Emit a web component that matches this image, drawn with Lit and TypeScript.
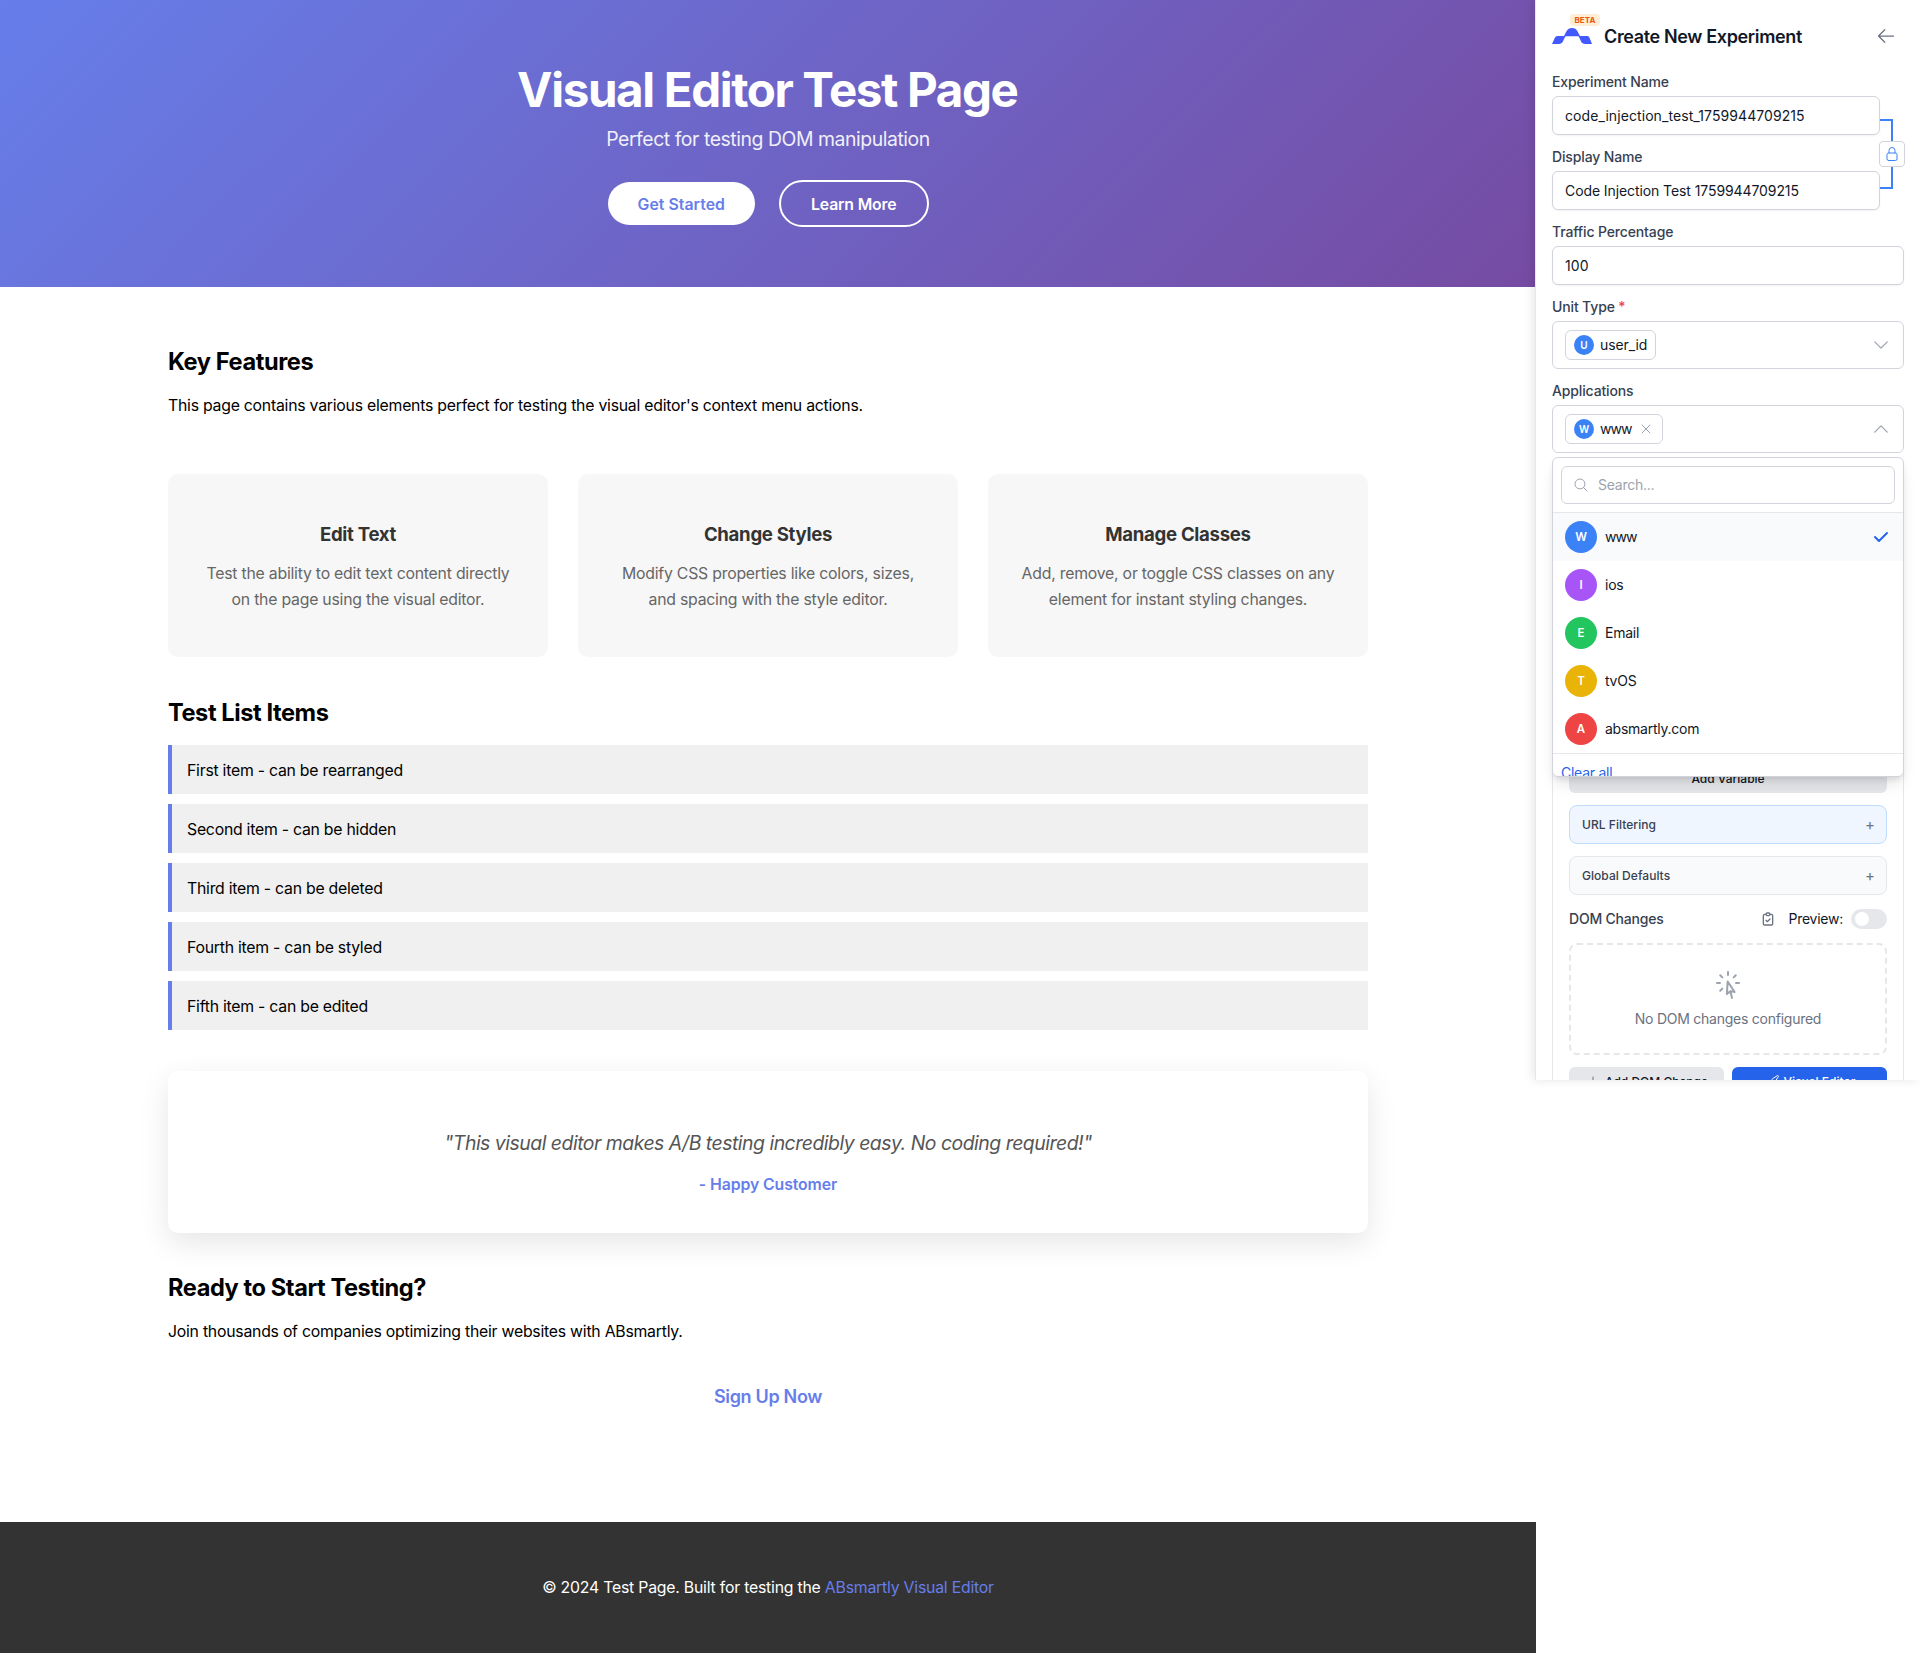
import { LitElement, html, css, svg } from "lit";
import { customElement } from "lit/decorators.js";

const FEATURES = [
  { title: "Edit Text", lines: ["Test the ability to edit text content directly", "on the page using the visual editor."] },
  { title: "Change Styles", lines: ["Modify CSS properties like colors, sizes,", "and spacing with the style editor."] },
  { title: "Manage Classes", lines: ["Add, remove, or toggle CSS classes on any", "element for instant styling changes."] },
];

const ITEMS = [
  "First item - can be rearranged",
  "Second item - can be hidden",
  "Third item - can be deleted",
  "Fourth item - can be styled",
  "Fifth item - can be edited",
];

const APPLICATIONS = [
  { name: "www", color: "#3b82f6", selected: true },
  { name: "ios", color: "#a855f7", selected: false },
  { name: "Email", color: "#22c55e", selected: false },
  { name: "tvOS", color: "#eab308", selected: false },
  { name: "absmartly.com", color: "#ef4444", selected: false },
];

const PATHS = {
  arrowLeft: "M10.5 19.5L3 12m0 0l7.5-7.5M3 12h18",
  lock: "M16.5 10.5V6.75a4.5 4.5 0 10-9 0v3.75m-.75 11.25h10.5a2.25 2.25 0 002.25-2.25v-6.75a2.25 2.25 0 00-2.25-2.25H6.75a2.25 2.25 0 00-2.25 2.25v6.75a2.25 2.25 0 002.25 2.25z",
  chevronDown: "M19.5 8.25l-7.5 7.5-7.5-7.5",
  chevronUp: "M4.5 15.75l7.5-7.5 7.5 7.5",
  close: "M6 18L18 6M6 6l12 12",
  search: "M21 21l-5.197-5.197m0 0A7.5 7.5 0 105.196 5.196a7.5 7.5 0 0010.607 10.607z",
  clipboard: "M9 5H7a2 2 0 00-2 2v12a2 2 0 002 2h10a2 2 0 002-2V7a2 2 0 00-2-2h-2M9 5a2 2 0 002 2h2a2 2 0 002-2M9 5a2 2 0 012-2h2a2 2 0 012 2m-6 9l2 2 4-4",
  cursor: "M15.042 21.672L13.684 16.6m0 0l-2.51 2.225.569-9.47 5.227 7.917-3.286-.672zM12 2.25V4.5m5.834.166l-1.591 1.591M20.25 10.5H18M7.757 14.743l-1.59 1.59M6 10.5H3.75m4.007-4.243l-1.59-1.59",
  plus: "M12 4.5v15m7.5-7.5h-15",
  brush: "M9.53 16.122a3 3 0 00-5.78 1.128 2.25 2.25 0 01-2.4 2.245 4.5 4.5 0 008.4-2.245c0-.399-.078-.78-.22-1.128zm0 0a15.998 15.998 0 003.388-1.62m-5.043-.025a15.994 15.994 0 011.622-3.395m3.42 3.42a15.995 15.995 0 004.764-4.648l3.876-5.814a1.151 1.151 0 00-1.597-1.597L14.146 6.32a15.996 15.996 0 00-4.649 4.763m3.42 3.42a6.776 6.776 0 00-3.42-3.42",
};

const icon = (d: string, size: number, width = 1.5) => html`
  <svg width=${size} height=${size} viewBox="0 0 24 24" fill="none" stroke="currentColor"
    stroke-width=${width} stroke-linecap="round" stroke-linejoin="round">${svg`<path d=${d}></path>`}</svg>`;

@customElement("test-page")
export class TestPage extends LitElement {
  static styles = css`
    :host { display: block; width: 1536px; font-family: Inter, sans-serif; font-size: 15.8px; line-height: 19px; letter-spacing: -0.24px; color: #000; background: #fff; }
    h1, h2, h3, p { margin: 0; }
    .hero { height: 287px; box-sizing: border-box; padding-top: 61px; text-align: center; color: #fff; background: linear-gradient(135deg, #667eea 0%, #764ba2 100%); }
    h1 { font-size: 47.5px; line-height: 58px; font-weight: 750; letter-spacing: -1.38px; text-indent: -1.4px; }
    .sub { margin-top: 8px; font-size: 19.4px; line-height: 24px; letter-spacing: -0.44px; opacity: 0.9; }
    .actions { margin-top: 29px; display: flex; justify-content: center; align-items: center; gap: 24px; }
    .btn { box-sizing: border-box; border-radius: 25px; font-weight: 600; padding: 13px 0 11px; white-space: nowrap; }
    .primary { width: 147.5px; background: #fff; color: #667eea; letter-spacing: 0.05px; }
    .outline { width: 149.5px; border: 2px solid #fff; letter-spacing: -0.16px; }
    .content { width: 1200px; margin: 0 auto; padding-top: 60px; box-sizing: border-box; height: 1234.5px; }
    h2 { font-size: 23.6px; line-height: 29px; font-weight: 700; letter-spacing: -0.42px; }
    .lead { margin-top: 20px; letter-spacing: -0.235px; }
    .cards { margin: 59px 0 41px; display: grid; grid-template-columns: repeat(3, 1fr); gap: 30px; }
    .card { height: 183.3px; box-sizing: border-box; padding-top: 49px; border-radius: 10px; background: #f7f7f7; text-align: center; }
    h3 { font-size: 18.6px; line-height: 22px; font-weight: 700; letter-spacing: -0.3px; color: #333; }
    .card p { margin-top: 15.5px; line-height: 26px; color: #666; letter-spacing: -0.22px; }
    .list { margin-top: 18px; display: flex; flex-direction: column; gap: 10px; }
    .item { border-left: 4px solid #667eea; background: #f0f0f0; padding: 15.5px 15px 14.5px; }
    .quote { margin: 40.5px 0 40px; height: 162px; box-sizing: border-box; padding-top: 60.2px; text-align: center; background: #fff; border-radius: 10px; box-shadow: 0 10px 30px rgba(0, 0, 0, 0.1); }
    .words { font-size: 19.4px; line-height: 24px; font-style: italic; letter-spacing: -0.48px; color: #555; }
    .author { margin-top: 19.8px; font-weight: 600; letter-spacing: -0.09px; color: #667eea; }
    .signup { margin-top: 45px; text-align: center; font-size: 18px; line-height: 22px; font-weight: 600; letter-spacing: -0.32px; color: #667eea; }
    .footer { height: 131px; box-sizing: border-box; padding-top: 56.5px; text-align: center; letter-spacing: -0.21px; background: #333; color: #fff; }
    .footer a { color: #667eea; }
  `;

  render() {
    return html`
      <header class="hero">
        <h1>Visual Editor Test Page</h1>
        <p class="sub">Perfect for testing DOM manipulation</p>
        <div class="actions">
          <div class="btn primary">Get Started</div>
          <div class="btn outline">Learn More</div>
        </div>
      </header>
      <main class="content">
        <h2>Key Features</h2>
        <p class="lead">This page contains various elements perfect for testing the visual editor's context menu actions.</p>
        <div class="cards">
          ${FEATURES.map((f) => html`<div class="card"><h3>${f.title}</h3><p>${f.lines[0]}<br />${f.lines[1]}</p></div>`)}
        </div>
        <h2>Test List Items</h2>
        <div class="list">${ITEMS.map((t) => html`<div class="item">${t}</div>`)}</div>
        <div class="quote">
          <p class="words">"This visual editor makes A/B testing incredibly easy. No coding required!"</p>
          <p class="author">- Happy Customer</p>
        </div>
        <h2>Ready to Start Testing?</h2>
        <p class="lead">Join thousands of companies optimizing their websites with ABsmartly.</p>
        <div class="signup">Sign Up Now</div>
      </main>
      <footer class="footer">© 2024 Test Page. Built for testing the <a>ABsmartly Visual Editor</a></footer>
    `;
  }
}

@customElement("experiment-panel")
export class ExperimentPanel extends LitElement {
  static styles = css`
    :host { display: block; position: relative; width: 385px; height: 1080px; margin-left: -1px; box-sizing: border-box; font-family: Inter, sans-serif; font-size: 14px; line-height: 20px; letter-spacing: -0.25px; color: #111827; background: #fff; border-left: 1px solid #e5e7eb; box-shadow: -2px 0 10px rgba(0, 0, 0, 0.1); }
    svg { display: block; flex: none; }
    .body { height: 1080px; box-sizing: border-box; padding: 21px 16px 0; overflow: hidden; }
    .header { display: flex; align-items: center; height: 30px; margin-bottom: 21px; }
    .logo { position: relative; margin-right: 12px; }
    .beta { position: absolute; left: 18px; top: -14px; width: 30px; height: 12px; border-radius: 4px; background: #ffedd5; color: #ea580c; font-size: 8px; line-height: 12px; font-weight: 700; letter-spacing: 0.1px; text-align: center; }
    .title { flex: 1; padding-top: 1px; font-size: 18px; line-height: 28px; font-weight: 600; letter-spacing: -0.36px; }
    .back { margin: 0 8px 0 0; color: #6b7280; }
    .label { font-weight: 500; letter-spacing: -0.14px; color: #374151; margin-bottom: 4px; }
    .req { color: #ef4444; }
    .input { box-sizing: border-box; height: 39px; padding: 9px 12px 8px; margin-bottom: 12px; border: 1px solid #d1d5db; border-radius: 6px; box-shadow: 0 1px 2px rgba(0, 0, 0, 0.05); background: #fff; }
    .linked { position: relative; padding-right: 24px; }
    .name { letter-spacing: 0.08px; }
    .display { letter-spacing: -0.09px; }
    .bracket { position: absolute; left: 328px; top: 47px; width: 13px; height: 70px; box-sizing: border-box; border: 2px solid #3b82f6; border-left: none; }
    .lock { position: absolute; left: 327px; top: 69px; width: 26px; height: 26px; box-sizing: border-box; display: grid; place-items: center; background: #fff; border: 1px solid #d1d5db; border-radius: 4px; color: #3b82f6; }
    .select { position: relative; display: flex; align-items: center; justify-content: space-between; height: 48px; box-sizing: border-box; padding: 0 12px; margin-bottom: 12px; border: 1px solid #d1d5db; border-radius: 6px; color: #9ca3af; }
    .chip { display: flex; align-items: center; gap: 6px; height: 30px; box-sizing: border-box; padding: 0 8px; border: 1px solid #d1d5db; border-radius: 6px; color: #111827; }
    .chip svg { color: #9ca3af; }
    .user { letter-spacing: -0.1px; }
    .www { letter-spacing: -0.9px; }
    .avatar { display: grid; place-items: center; border-radius: 50%; color: #fff; font-weight: 600; letter-spacing: 0; }
    .small { width: 20px; height: 20px; font-size: 10px; background: #3b82f6; }
    .big { width: 32px; height: 32px; font-size: 11.5px; }
    .menu { position: absolute; left: -1px; top: 51px; width: 352px; height: 320px; box-sizing: border-box; overflow: hidden; background: #fff; border: 1px solid #d1d5db; border-radius: 6px; box-shadow: 0 10px 15px -3px rgba(0, 0, 0, 0.1), 0 4px 6px -2px rgba(0, 0, 0, 0.1); color: #111827; z-index: 2; }
    .searchbar { padding: 8px; border-bottom: 1px solid #e5e7eb; }
    .search { display: flex; align-items: center; gap: 9px; height: 38px; box-sizing: border-box; padding-left: 11px; border: 1px solid #d1d5db; border-radius: 6px; color: #9ca3af; }
    .option { display: flex; align-items: center; gap: 8px; height: 48px; box-sizing: border-box; padding: 0 12px; }
    .selected { background: #f9fafb; }
    .grow { flex: 1; }
    .check { color: #2563eb; }
    .clear { border-top: 1px solid #e5e7eb; padding: 9px 8px 8px; color: #2563eb; }
    .variant { height: 700px; box-sizing: border-box; padding: 299px 16px 0; border: 1px solid #e5e7eb; border-radius: 8px; display: flex; flex-direction: column; }
    .button { height: 28px; box-sizing: border-box; display: flex; align-items: center; justify-content: center; gap: 4px; flex: none; border-radius: 6px; background: #e5e7eb; font-size: 12px; line-height: 16px; font-weight: 500; letter-spacing: 0; }
    .fold { display: flex; justify-content: space-between; align-items: center; flex: none; height: 39px; box-sizing: border-box; margin-top: 12px; padding: 0 12px; border: 1px solid #e5e7eb; border-radius: 8px; background: #f9fafb; font-size: 12px; font-weight: 500; letter-spacing: 0.04px; color: #374151; }
    .blue { background: #eff6ff; border-color: #bfdbfe; }
    .sign { font-size: 15px; font-weight: 400; color: #6b7280; margin-right: -1px; }
    .domrow { display: flex; align-items: center; margin: 14px 0; height: 20px; flex: none; }
    .domtitle { flex: 1; font-weight: 500; letter-spacing: -0.2px; color: #374151; }
    .domrow svg { color: #6b7280; margin-right: 12px; }
    .toggle { width: 36px; height: 20px; box-sizing: border-box; padding: 3px 4px; margin-left: 8px; border-radius: 10px; background: #e5e7eb; }
    .knob { width: 14px; height: 14px; border-radius: 50%; background: #fff; }
    .empty { height: 112px; box-sizing: border-box; flex: none; padding-top: 24px; display: flex; flex-direction: column; align-items: center; gap: 8px; border: 2px dashed #e5e7eb; border-radius: 8px; color: #6b7280; }
    .empty svg { color: #9ca3af; }
    .pair { display: grid; grid-template-columns: 1fr 1fr; gap: 8px; margin-top: 12px; }
    .pair .button { height: 30px; }
    .pair svg { color: #6b7280; }
    .pair .solid, .pair .solid svg { color: #fff; }
    .solid { background: #2563eb; }
  `;

  private menu() {
    return html`
      <div class="menu">
        <div class="searchbar"><div class="search">${icon(PATHS.search, 16)}<span>Search...</span></div></div>
        ${APPLICATIONS.map((a) => html`
          <div class="option ${a.selected ? "selected" : ""}">
            <span class="avatar big" style="background:${a.color}">${a.name[0].toUpperCase()}</span>
            <span class="grow ${a.selected ? "www" : ""}">${a.name}</span>
            ${a.selected
              ? html`<svg class="check" width="20" height="20" viewBox="0 0 20 20" fill="currentColor"><path d="M16.707 5.293a1 1 0 010 1.414l-8 8a1 1 0 01-1.414 0l-4-4a1 1 0 011.414-1.414L8 12.586l7.293-7.293a1 1 0 011.414 0z"></path></svg>`
              : ""}
          </div>`)}
        <div class="clear">Clear all</div>
      </div>`;
  }

  render() {
    return html`
      <div class="body">
        <div class="header">
          <div class="logo">
            <svg width="40" height="16" viewBox="0 0 40 16" fill="#4259ff"><path d="M0 16L3 9.500Q3.700 8 5.400 8H12C14 5 14.500 0 20 0S26 5 28 8H35.500Q36.800 8 37.400 9.500L40 16H33.500C28.500 16 29 12 26.500 8.300H13.500C11 12 11.500 16 6.500 16Z"></path></svg>
            <span class="beta">BETA</span>
          </div>
          <div class="title">Create New Experiment</div>
          <div class="back">${icon(PATHS.arrowLeft, 20)}</div>
        </div>
        <div class="linked">
          <div class="label">Experiment Name</div>
          <div class="input name">code_injection_test_1759944709215</div>
          <div class="label">Display Name</div>
          <div class="input display">Code Injection Test 1759944709215</div>
          <div class="bracket"></div>
          <div class="lock">${icon(PATHS.lock, 16)}</div>
        </div>
        <div class="label">Traffic Percentage</div>
        <div class="input name">100</div>
        <div class="label">Unit Type <span class="req">*</span></div>
        <div class="select">
          <div class="chip"><span class="avatar small">U</span><span class="user">user_id</span></div>
          ${icon(PATHS.chevronDown, 20)}
        </div>
        <div class="label">Applications</div>
        <div class="select">
          <div class="chip"><span class="avatar small">W</span><span class="www">www</span>${icon(PATHS.close, 16)}</div>
          ${icon(PATHS.chevronUp, 20)}
          ${this.menu()}
        </div>
        <div class="variant">
          <div class="button">Add Variable</div>
          <div class="fold blue"><span>URL Filtering</span><span class="sign">+</span></div>
          <div class="fold"><span>Global Defaults</span><span class="sign">+</span></div>
          <div class="domrow">
            <span class="domtitle">DOM Changes</span>
            ${icon(PATHS.clipboard, 16, 2)}
            <span>Preview:</span>
            <span class="toggle"><div class="knob"></div></span>
          </div>
          <div class="empty">${icon(PATHS.cursor, 32)}<span>No DOM changes configured</span></div>
          <div class="pair">
            <div class="button">${icon(PATHS.plus, 16)}<span>Add DOM Change</span></div>
            <div class="button solid">${icon(PATHS.brush, 16)}<span>Visual Editor</span></div>
          </div>
        </div>
      </div>
    `;
  }
}

@customElement("app-root")
export class AppRoot extends LitElement {
  static styles = css`
    :host { display: flex; align-items: flex-start; width: 1920px; height: 1653px; overflow: hidden; background: #fff; }
    test-page, experiment-panel { flex: none; }
  `;

  render() {
    return html`<test-page></test-page><experiment-panel></experiment-panel>`;
  }
}
